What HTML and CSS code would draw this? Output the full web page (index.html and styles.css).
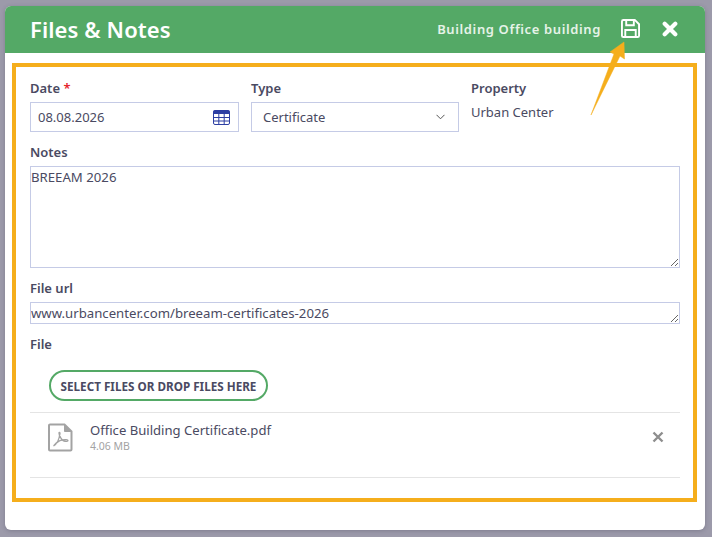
FILE: index.html
```html
<!DOCTYPE html>
<html>
<head>
  <meta charset="UTF-8">
  <title>Files &amp; Notes</title>
  <link rel="stylesheet" href="styles.css">
</head>
<body>
  <div class="dialog">
    <div class="header-bar">
      <div class="header-title">Files &amp; Notes</div>
      <div class="header-sub">Building Office building</div>
      <svg class="save-icon" width="19" height="19" viewBox="0 0 20 20" fill="none" stroke="#fff" stroke-width="2">
        <path d="M2.500 1h12l4.500 4.500v12a1.500 1.500 0 0 1-1.500 1.500h-15A1.500 1.500 0 0 1 1 17.500v-15A1.500 1.500 0 0 1 2.500 1z"/>
        <path d="M5.500 1.500v5h8v-5"/>
        <path d="M4.500 19v-7.500h11V19"/>
      </svg>
      <svg class="close-icon" width="16" height="16" viewBox="0 0 16 16" fill="none" stroke="#fff" stroke-width="4.200" stroke-linecap="round">
        <path d="M2.700 2.700l10.600 10.600M13.300 2.700L2.700 13.300"/>
      </svg>
    </div>

    <div class="content">
      <div class="form-row">
        <div>
          <div class="field-label">Date <span class="required">*</span></div>
          <div class="input-box date-input">
            <span>08.08.2026</span>
            <svg width="17" height="15" viewBox="0 0 17 15">
              <rect x="0.500" y="0.500" width="16" height="14" rx="1.500" fill="none" stroke="#2d3fa3"/>
              <rect x="0.500" y="0.500" width="16" height="3.500" fill="#2d3fa3"/>
              <path d="M0.500 7.500h16M0.500 11h16M5.800 4v10.500M11.200 4v10.500" stroke="#2d3fa3"/>
            </svg>
          </div>
        </div>
        <div>
          <div class="field-label">Type</div>
          <div class="input-box type-input">
            <span>Certificate</span>
            <svg width="9" height="6" viewBox="0 0 9 6" fill="none" stroke="#555" stroke-width="1">
              <path d="M0.500 0.800l4 4 4-4"/>
            </svg>
          </div>
        </div>
        <div>
          <div class="field-label">Property</div>
          <div class="property-value">Urban Center</div>
        </div>
      </div>

      <div class="field-label notes-label">Notes</div>
      <textarea class="text-box notes-box">BREEAM 2026</textarea>

      <div class="field-label url-label">File url</div>
      <textarea class="text-box url-box">www.urbancenter.com/breeam-certificates-2026</textarea>

      <div class="field-label file-label">File</div>
      <div class="upload-wrap">
        <button class="upload-btn">SELECT FILES OR DROP FILES HERE</button>
      </div>

      <div class="file-row">
        <svg class="pdf-icon" width="25" height="29" viewBox="0 0 25 29" fill="none" stroke="#a3a3a3">
          <path d="M2 1.500h14.500l7 7V26.500a1 1 0 0 1-1 1H2a1 1 0 0 1-1-1V2.500a1 1 0 0 1 1-1z" stroke-width="2"/>
          <path d="M16.500 1.500v7h7" fill="#a3a3a3" stroke-width="1"/>
          <path d="M5.500 23c3-1.500 5.500-6 6.500-12.500 0-1.500-1-1.500-1-0.500 0 3 3 7.500 5 8 2 0.500 4 0.500 4-0.500s-3-1-6-0.500c-3 0.500-6 3-8 5.500z" stroke-width="1.300"/>
        </svg>
        <div class="file-info">
          <div class="file-name">Office Building Certificate.pdf</div>
          <div class="file-size">4.06 MB</div>
        </div>
        <svg class="remove-icon" width="12" height="12" viewBox="0 0 12 12" fill="none" stroke="#8e8e8e" stroke-width="2.400">
          <path d="M1.500 1.500l9 9M10.500 1.500l-9 9"/>
        </svg>
      </div>
    </div>
  </div>

  <svg class="arrow" width="38" height="76" viewBox="0 0 38 76">
    <path d="M1 74L24 13L20 11L34 1L34.500 18L30 15z" fill="#f5ae1c" stroke="#f5ae1c" stroke-width="0.500" stroke-linejoin="round"/>
  </svg>
</body>
</html>
```

FILE: styles.css
```css
body {
  margin: 0;
  height: 537px;
  overflow: hidden;
  background-color: #9c9aaa;
  font-family: "Noto Sans", Arial, sans-serif;
  color: #4a4a62;
}

.dialog {
  width: 700px;
  height: 524px;
  margin: 6px 0 0 5px;
  background-color: #fff;
  border-radius: 6px;
  overflow: hidden;
  box-shadow: 0 1px 4px rgba(60, 60, 80, 0.3);
}

.header-bar {
  height: 47px;
  display: flex;
  align-items: center;
  background-color: #54a966;
  color: #fff;
  padding: 0 27px 2px 25px;
  box-sizing: border-box;
}

.header-title {
  font-size: 22px;
  font-weight: 600;
  flex: 1;
  letter-spacing: 0.1px;
}

.header-sub {
  font-size: 13px;
  font-weight: 600;
  letter-spacing: 0.62px;
  color: #e6f3e8;
  margin-right: 20px;
}

.close-icon {
  margin-left: 22px;
}

.content {
  height: 439px;
  box-sizing: border-box;
  margin: 10px 8px 0 7px;
  border: 4px solid #f5ae1c;
  padding: 11px 13px 0 14px;
}

.form-row {
  display: grid;
  grid-template-columns: 209px 208px 209px;
  gap: 12px;
}

.field-label {
  font-size: 13px;
  font-weight: 600;
  line-height: 20px;
  margin-bottom: 4px;
}

.required {
  color: #e5262b;
}

.input-box {
  height: 30px;
  box-sizing: border-box;
  border: 1px solid #c5cbe6;
  display: flex;
  align-items: center;
  justify-content: space-between;
  font-size: 13px;
}

.date-input {
  padding: 0 8px 0 7px;
}

.type-input {
  padding: 0 13px 0 11px;
}

.property-value {
  font-size: 13px;
  line-height: 20px;
}

.text-box {
  display: block;
  width: 100%;
  box-sizing: border-box;
  border: 1px solid #c5cbe6;
  border-radius: 0;
  padding: 0;
  margin: 0;
  font-family: "Noto Sans", Arial, sans-serif;
  font-size: 13.2px;
  line-height: 20px;
  color: #4a4a62;
  outline: none;
}

.notes-label {
  margin-top: 10px;
}

.notes-box {
  height: 102px;
}

.url-label {
  margin-top: 10px;
}

.url-box {
  height: 22px;
  overflow: hidden;
}

.file-label {
  margin-top: 10px;
  margin-bottom: 0;
}

.upload-wrap {
  padding: 16px 19px 11px;
}

.upload-btn {
  display: block;
  height: 31px;
  width: 219px;
  padding: 0;
  background-color: #fff;
  border: 2px solid #54a966;
  border-radius: 16px;
  font-family: "Noto Sans", Arial, sans-serif;
  font-size: 11.7px;
  font-weight: 700;
  color: #4a4a62;
  white-space: nowrap;
}

.file-row {
  height: 64px;
  border-top: 1px solid #e4e4e4;
  border-bottom: 1px solid #e4e4e4;
  display: flex;
  align-items: flex-start;
}

.pdf-icon {
  margin: 10px 0 0 18px;
}

.file-info {
  flex: 1;
  margin: 7px 0 0 17px;
}

.file-name {
  font-size: 13.1px;
  line-height: 20px;
}

.file-size {
  font-size: 10.5px;
  line-height: 13px;
  color: #a3a3a3;
}

.remove-icon {
  margin: 18px 16px 0 0;
}

/* annotation arrow over the header */
.arrow {
  position: absolute;
  left: 590px;
  top: 41px;
}
```
